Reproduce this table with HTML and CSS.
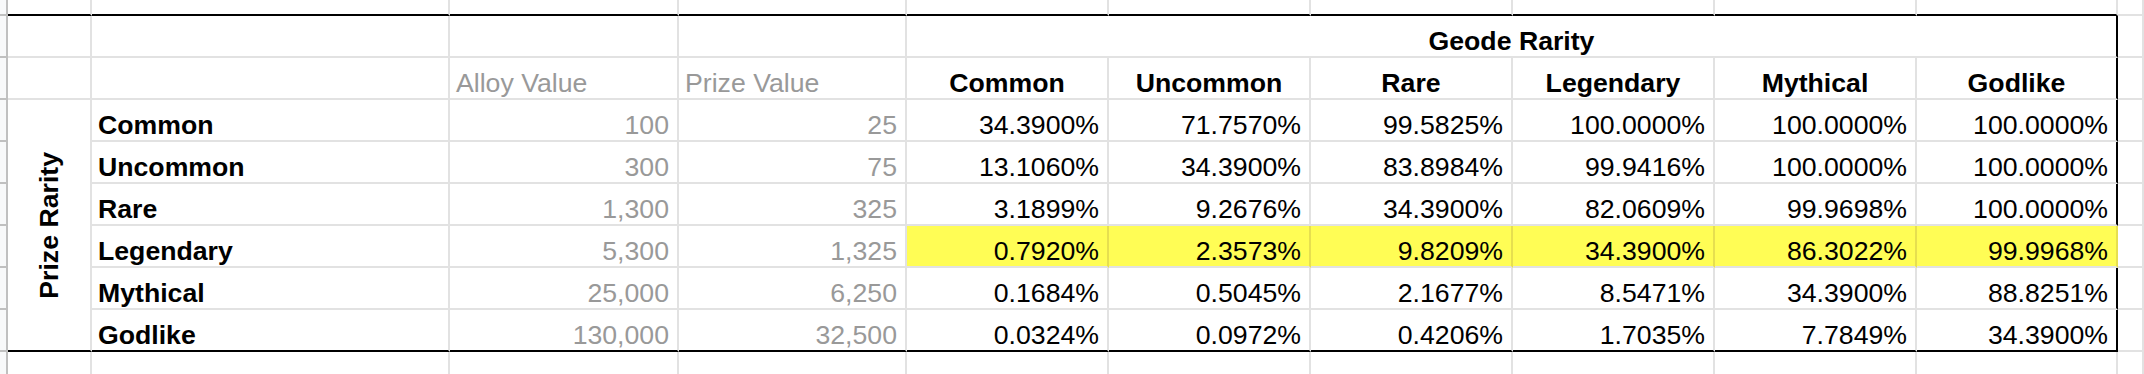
FILE: index.html
```html
<!DOCTYPE html>
<html lang="en">
<head>
<meta charset="utf-8">
<title>Geode Rarity</title>
<link rel="stylesheet" href="styles.css">
</head>
<body>
<div class="sheet">
  <div class="row">
    <div class="c rh"></div>
    <div class="c bt"></div><div class="c bt"></div><div class="c bt"></div><div class="c bt"></div>
    <div class="c bt"></div><div class="c bt"></div><div class="c bt"></div><div class="c bt"></div><div class="c bt"></div><div class="c bt"></div>
    <div class="c"></div>
  </div>
  <div class="row">
    <div class="c rh"></div>
    <div class="c"></div><div class="c"></div><div class="c"></div><div class="c"></div>
    <div class="c b ctr span6 br">Geode Rarity</div>
    <div class="c"></div>
  </div>
  <div class="row">
    <div class="c rh"></div>
    <div class="c"></div><div class="c"></div>
    <div class="c muted">Alloy Value</div>
    <div class="c muted">Prize Value</div>
    <div class="c b ctr">Common</div>
    <div class="c b ctr">Uncommon</div>
    <div class="c b ctr">Rare</div>
    <div class="c b ctr">Legendary</div>
    <div class="c b ctr">Mythical</div>
    <div class="c b ctr br">Godlike</div>
    <div class="c"></div>
  </div>
  <div class="row">
    <div class="c rh"></div>
    <div class="c b merged bt"><span class="vert">Prize Rarity</span></div>
    <div class="c b">Common</div>
    <div class="c num muted">100</div>
    <div class="c num muted">25</div>
    <div class="c num">34.3900%</div>
    <div class="c num">71.7570%</div>
    <div class="c num">99.5825%</div>
    <div class="c num">100.0000%</div>
    <div class="c num">100.0000%</div>
    <div class="c num br">100.0000%</div>
    <div class="c"></div>
  </div>
  <div class="row">
    <div class="c rh"></div>
    <div class="c b">Uncommon</div>
    <div class="c num muted">300</div>
    <div class="c num muted">75</div>
    <div class="c num">13.1060%</div>
    <div class="c num">34.3900%</div>
    <div class="c num">83.8984%</div>
    <div class="c num">99.9416%</div>
    <div class="c num">100.0000%</div>
    <div class="c num br">100.0000%</div>
    <div class="c"></div>
  </div>
  <div class="row">
    <div class="c rh"></div>
    <div class="c b">Rare</div>
    <div class="c num muted">1,300</div>
    <div class="c num muted">325</div>
    <div class="c num">3.1899%</div>
    <div class="c num">9.2676%</div>
    <div class="c num">34.3900%</div>
    <div class="c num">82.0609%</div>
    <div class="c num">99.9698%</div>
    <div class="c num br">100.0000%</div>
    <div class="c"></div>
  </div>
  <div class="row">
    <div class="c rh"></div>
    <div class="c b">Legendary</div>
    <div class="c num muted">5,300</div>
    <div class="c num muted">1,325</div>
    <div class="c num hl">0.7920%</div>
    <div class="c num hl">2.3573%</div>
    <div class="c num hl">9.8209%</div>
    <div class="c num hl">34.3900%</div>
    <div class="c num hl">86.3022%</div>
    <div class="c num hl br">99.9968%</div>
    <div class="c"></div>
  </div>
  <div class="row">
    <div class="c rh"></div>
    <div class="c b">Mythical</div>
    <div class="c num muted">25,000</div>
    <div class="c num muted">6,250</div>
    <div class="c num">0.1684%</div>
    <div class="c num">0.5045%</div>
    <div class="c num">2.1677%</div>
    <div class="c num">8.5471%</div>
    <div class="c num">34.3900%</div>
    <div class="c num br">88.8251%</div>
    <div class="c"></div>
  </div>
  <div class="row">
    <div class="c rh"></div>
    <div class="c b bt">Godlike</div>
    <div class="c num muted bt">130,000</div>
    <div class="c num muted bt">32,500</div>
    <div class="c num bt">0.0324%</div>
    <div class="c num bt">0.0972%</div>
    <div class="c num bt">0.4206%</div>
    <div class="c num bt">1.7035%</div>
    <div class="c num bt">7.7849%</div>
    <div class="c num bt br">34.3900%</div>
    <div class="c"></div>
  </div>
  <div class="row">
    <div class="c rh open"></div>
    <div class="c open"></div><div class="c open"></div><div class="c open"></div><div class="c open"></div>
    <div class="c open"></div><div class="c open"></div><div class="c open"></div><div class="c open"></div><div class="c open"></div><div class="c open"></div>
    <div class="c open"></div>
  </div>
</div>
</body>
</html>
```
FILE: styles.css
```css
html, body {
  margin: 0;
  padding: 0;
  background: #ffffff;
  overflow: hidden;
}

body {
  font-family: "Liberation Sans", Arial, sans-serif;
  font-size: 26.67px;
  color: #000000;
}

.sheet {
  display: grid;
  grid-template-columns: 8px 84px 358px 229px 228px 202px 202px 202px 202px 202px 201px 26px;
  grid-template-rows: 16px repeat(8, 42px) 22px;
  width: 2144px;
  height: 374px;
  overflow: hidden;
}

.row {
  display: contents;
}

.c {
  box-sizing: border-box;
  border-right: 2px solid #e2e2e2;
  border-bottom: 2px solid #e2e2e2;
  display: flex;
  align-items: flex-end;
  padding: 0 6px;
  line-height: 30px;
  white-space: nowrap;
  overflow: hidden;
  min-width: 0;
}

.open {
  border-bottom: 0;
}

.rh {
  background: #f8f9fa;
  border-right-color: #c0c0c0;
  border-bottom-color: #c0c0c0;
  padding: 0;
}

.bt {
  border-bottom-color: #000000;
}

.br {
  border-right-color: #000000;
}

.b {
  font-weight: bold;
}

.muted {
  color: #999999;
}

.num {
  justify-content: flex-end;
  padding-right: 8px;
}

.ctr {
  justify-content: center;
}

.span6 {
  grid-column: span 6;
}

.merged {
  grid-row: span 6;
  align-items: center;
  justify-content: center;
  padding: 0;
}

.vert {
  writing-mode: vertical-rl;
  transform: rotate(180deg);
  line-height: 30px;
}

.hl {
  background: #fffd55;
  border-right-color: #e6df4f;
}
```
